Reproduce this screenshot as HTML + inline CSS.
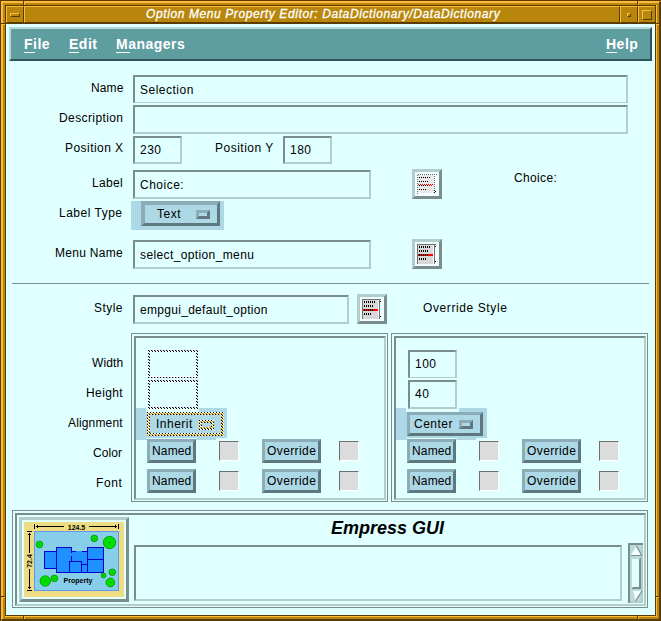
<!DOCTYPE html>
<html><head><meta charset="utf-8">
<style>
*{margin:0;padding:0;box-sizing:border-box}
html,body{width:661px;height:621px;overflow:hidden;background:#B8860B}
body{position:relative;font-family:"Liberation Sans",sans-serif;font-size:12px;color:#000}
.a{position:absolute}
.od{position:absolute;background:#583C04}
.ol{position:absolute;background:#FFBA3E}
.om{position:absolute;background:#B8860B}
.c{position:absolute;background:#E0FFFF}
.bs{position:absolute;background:#7B8C8C}
.ts{position:absolute;background:#B3CCCC}
.tf{position:absolute;background:#E0FFFF;border-style:solid;border-width:2px;border-color:#7B8C8C #B3CCCC #B3CCCC #7B8C8C}
.t{position:absolute;white-space:nowrap;line-height:12px;font-size:12px;letter-spacing:0.5px}
.btn{position:absolute;background:#ADD8E6;border-style:solid;border-width:3px;border-color:#8AADB8 #5F777F #5F777F #8AADB8}
.sq{position:absolute;background:#DCDCDC;border-style:solid;border-width:1px;border-color:#6E6E6E #FFFFFF #FFFFFF #6E6E6E}
.ib{position:absolute;background:#fff;border-style:solid;border-width:3px;border-color:#B3CCCC #7B8C8C #7B8C8C #B3CCCC}
.dot{position:absolute;background:repeating-conic-gradient(#000 0 25%,#E8D8F8 0 50%) 0 0/2px 2px}
.mb{position:absolute;white-space:nowrap;font-weight:bold;font-size:14px;line-height:14px;color:#fff;letter-spacing:0.5px}
.ul{position:absolute;background:#fff;height:1px}
</style></head><body>
<svg width="0" height="0" style="position:absolute"><defs>
<pattern id="pv" width="3" height="3" patternUnits="userSpaceOnUse"><rect width="3" height="3" fill="#F4FFFF"/><rect x="0" y="0" width="1" height="1" fill="#000"/><rect x="1" y="1" width="1" height="1" fill="#000"/><rect x="1" y="0" width="1" height="1" fill="#B9A0E8"/></pattern>
<pattern id="po" width="3" height="3" patternUnits="userSpaceOnUse"><rect width="3" height="3" fill="#F4FFFF"/><rect x="0" y="0" width="1" height="1" fill="#000"/><rect x="2" y="2" width="1" height="1" fill="#000"/><rect x="1" y="1" width="2" height="1" fill="#D4980E"/><rect x="0" y="2" width="1" height="1" fill="#D4980E"/></pattern>
</defs></svg>
<!-- window frame -->
<div class="od" style="left:0;top:0;width:661px;height:1px"></div>
<div class="od" style="left:0;top:0;width:1px;height:621px"></div>
<div class="ol" style="left:1px;top:1px;width:658px;height:2px"></div>
<div class="ol" style="left:1px;top:1px;width:2px;height:618px"></div>
<div class="od" style="left:659px;top:2px;width:2px;height:619px"></div>
<div class="od" style="left:2px;top:619px;width:659px;height:2px"></div>
<div class="od" style="left:5px;top:5px;width:651px;height:1px"></div>
<div class="od" style="left:5px;top:5px;width:1px;height:611px"></div>
<div class="ol" style="left:656px;top:5px;width:1px;height:612px"></div>
<div class="ol" style="left:5px;top:616px;width:652px;height:1px"></div>
<!-- corner separators -->
<div class="od" style="left:23px;top:0;width:1px;height:6px"></div>
<div class="ol" style="left:24px;top:1px;width:1px;height:4px"></div>
<div class="od" style="left:637px;top:0;width:1px;height:6px"></div>
<div class="ol" style="left:638px;top:1px;width:1px;height:4px"></div>
<div class="od" style="left:0;top:23px;width:6px;height:1px"></div>
<div class="ol" style="left:1px;top:24px;width:4px;height:1px"></div>
<div class="od" style="left:655px;top:23px;width:6px;height:1px"></div>
<div class="ol" style="left:656px;top:24px;width:3px;height:1px"></div>
<div class="od" style="left:0;top:596px;width:6px;height:1px"></div>
<div class="ol" style="left:1px;top:597px;width:4px;height:1px"></div>
<div class="od" style="left:655px;top:596px;width:6px;height:1px"></div>
<div class="ol" style="left:656px;top:597px;width:3px;height:1px"></div>
<div class="od" style="left:23px;top:616px;width:1px;height:5px"></div>
<div class="ol" style="left:24px;top:617px;width:1px;height:2px"></div>
<div class="od" style="left:637px;top:616px;width:1px;height:5px"></div>
<div class="ol" style="left:638px;top:617px;width:1px;height:2px"></div>
<!-- title bar buttons -->
<div class="om" style="left:6px;top:6px;width:18px;height:17px;border-style:solid;border-width:1px;border-color:#FFBA3E #583C04 #583C04 #FFBA3E"></div>
<div class="om" style="left:10px;top:13px;width:10px;height:4px;border-style:solid;border-width:1px;border-color:#FFBA3E #583C04 #583C04 #FFBA3E"></div>
<div class="om" style="left:24px;top:6px;width:596px;height:17px;border-style:solid;border-width:1px;border-color:#FFBA3E #583C04 #583C04 #FFBA3E"></div>
<div class="om" style="left:620px;top:6px;width:18px;height:17px;border-style:solid;border-width:1px;border-color:#FFBA3E #583C04 #583C04 #FFBA3E"></div>
<div class="om" style="left:627px;top:13px;width:4px;height:4px;border-style:solid;border-width:1px;border-color:#FFBA3E #583C04 #583C04 #FFBA3E"></div>
<div class="om" style="left:638px;top:6px;width:18px;height:17px;border-style:solid;border-width:1px;border-color:#FFBA3E #583C04 #583C04 #FFBA3E"></div>
<div class="om" style="left:642px;top:10px;width:10px;height:10px;border-style:solid;border-width:1px;border-color:#FFBA3E #583C04 #583C04 #FFBA3E"></div>
<div class="a" style="left:146px;top:6px;white-space:nowrap;font-style:italic;font-size:12px;letter-spacing:0.6px;line-height:16px;color:#fff;-webkit-text-stroke:0.3px #fff">Option Menu Property Editor: DataDictionary/DataDictionary</div>
<!-- content area -->
<div class="od" style="left:6px;top:23px;width:650px;height:1px"></div>
<div class="od" style="left:655px;top:6px;width:1px;height:610px"></div>
<div class="od" style="left:6px;top:615px;width:650px;height:1px"></div>
<div class="c" style="left:6px;top:24px;width:649px;height:591px"></div>

<!-- menubar -->
<div class="a" style="left:9px;top:27px;width:643px;height:34px;background:#5F9EA0;border-style:solid;border-width:2px;border-color:#B9D7D7 #2E5057 #2E5057 #B9D7D7"></div>
<div class="mb" style="left:24px;top:37px">File</div>
<div class="ul" style="left:24px;top:52px;width:11px"></div>
<div class="mb" style="left:69px;top:37px">Edit</div>
<div class="ul" style="left:69px;top:52px;width:10px"></div>
<div class="mb" style="left:116px;top:37px">Managers</div>
<div class="ul" style="left:116px;top:52px;width:14px"></div>
<div class="mb" style="left:606px;top:37px">Help</div>
<div class="ul" style="left:606px;top:52px;width:11px"></div>

<!-- labels -->
<div class="t" style="left:91px;top:82px;letter-spacing:0.1px">Name</div>
<div class="t" style="left:59px;top:112px;letter-spacing:0.4px">Description</div>
<div class="t" style="left:65px;top:142px;letter-spacing:0.45px">Position X</div>
<div class="t" style="left:215px;top:142px;letter-spacing:0.5px">Position Y</div>
<div class="t" style="left:92px;top:177px;letter-spacing:0.3px">Label</div>
<div class="t" style="left:59px;top:207px;letter-spacing:0.5px">Label Type</div>
<div class="t" style="left:55px;top:247px;letter-spacing:0.3px">Menu Name</div>
<div class="t" style="left:514px;top:172px;letter-spacing:0.35px">Choice:</div>
<div class="t" style="left:94px;top:302px;letter-spacing:0.45px">Style</div>
<div class="t" style="left:423px;top:302px;letter-spacing:0.6px">Override Style</div>
<div class="t" style="left:92px;top:357px;letter-spacing:0.1px">Width</div>
<div class="t" style="left:86px;top:387px;letter-spacing:0.4px">Height</div>
<div class="t" style="left:68px;top:417px;letter-spacing:0.15px">Alignment</div>
<div class="t" style="left:93px;top:447px;letter-spacing:0.1px">Color</div>
<div class="t" style="left:96px;top:477px;letter-spacing:0.6px">Font</div>

<!-- text fields -->
<div class="tf" style="left:133px;top:75px;width:495px;height:28px;border-bottom-width:1px"></div>
<div class="t" style="left:140px;top:84px">Selection</div>
<div class="tf" style="left:133px;top:105px;width:495px;height:29px"></div>
<div class="tf" style="left:133px;top:136px;width:49px;height:28px"></div>
<div class="t" style="left:140px;top:144px">230</div>
<div class="tf" style="left:283px;top:136px;width:49px;height:28px"></div>
<div class="t" style="left:290px;top:144px">180</div>
<div class="tf" style="left:133px;top:170px;width:238px;height:29px"></div>
<div class="t" style="left:140px;top:179px">Choice:</div>
<div class="tf" style="left:133px;top:240px;width:238px;height:29px"></div>
<div class="t" style="left:140px;top:249px;letter-spacing:0.38px">select_option_menu</div>

<!-- label type option menu -->
<div class="a" style="left:131px;top:201px;width:93px;height:29px;background:#ADD8E6"></div>
<div class="a" style="left:141px;top:201px;width:79px;height:25px;background:#ADD8E6;border-style:solid;border-width:4px 3px 3px 4px;border-color:#8AADB8 #5F777F #5F777F #8AADB8"></div>
<div class="t" style="left:157px;top:208px">Text</div>
<div class="btn" style="left:196px;top:210px;width:14px;height:9px"></div>

<!-- icon buttons -->
<div class="ib" style="left:412px;top:169px;width:30px;height:30px;background:#F0FFFF"></div>
<svg class="a" style="left:415px;top:172px" width="24" height="24" shape-rendering="crispEdges"><rect x="3" y="3" width="1" height="1" fill="#E6D2D2"/><rect x="5" y="3" width="1" height="1" fill="#E6D2D2"/><rect x="7" y="3" width="1" height="1" fill="#E6D2D2"/><rect x="9" y="3" width="1" height="1" fill="#E6D2D2"/><rect x="11" y="3" width="1" height="1" fill="#E6D2D2"/><rect x="13" y="3" width="1" height="1" fill="#E6D2D2"/><rect x="15" y="3" width="1" height="1" fill="#E6D2D2"/><rect x="17" y="3" width="1" height="1" fill="#E6D2D2"/><rect x="4" y="4" width="1" height="1" fill="#E6D2D2"/><rect x="6" y="4" width="1" height="1" fill="#E6D2D2"/><rect x="8" y="4" width="1" height="1" fill="#E6D2D2"/><rect x="10" y="4" width="1" height="1" fill="#E6D2D2"/><rect x="12" y="4" width="1" height="1" fill="#E6D2D2"/><rect x="14" y="4" width="1" height="1" fill="#E6D2D2"/><rect x="16" y="4" width="1" height="1" fill="#E6D2D2"/><rect x="18" y="4" width="1" height="1" fill="#E6D2D2"/><rect x="3" y="5" width="1" height="1" fill="#E6D2D2"/><rect x="5" y="5" width="1" height="1" fill="#E6D2D2"/><rect x="7" y="5" width="1" height="1" fill="#E6D2D2"/><rect x="9" y="5" width="1" height="1" fill="#E6D2D2"/><rect x="11" y="5" width="1" height="1" fill="#E6D2D2"/><rect x="13" y="5" width="1" height="1" fill="#E6D2D2"/><rect x="15" y="5" width="1" height="1" fill="#E6D2D2"/><rect x="17" y="5" width="1" height="1" fill="#E6D2D2"/><rect x="4" y="6" width="1" height="1" fill="#E6D2D2"/><rect x="6" y="6" width="1" height="1" fill="#E6D2D2"/><rect x="8" y="6" width="1" height="1" fill="#E6D2D2"/><rect x="10" y="6" width="1" height="1" fill="#E6D2D2"/><rect x="12" y="6" width="1" height="1" fill="#E6D2D2"/><rect x="14" y="6" width="1" height="1" fill="#E6D2D2"/><rect x="16" y="6" width="1" height="1" fill="#E6D2D2"/><rect x="18" y="6" width="1" height="1" fill="#E6D2D2"/><rect x="3" y="7" width="1" height="1" fill="#E6D2D2"/><rect x="5" y="7" width="1" height="1" fill="#E6D2D2"/><rect x="7" y="7" width="1" height="1" fill="#E6D2D2"/><rect x="9" y="7" width="1" height="1" fill="#E6D2D2"/><rect x="11" y="7" width="1" height="1" fill="#E6D2D2"/><rect x="13" y="7" width="1" height="1" fill="#E6D2D2"/><rect x="15" y="7" width="1" height="1" fill="#E6D2D2"/><rect x="17" y="7" width="1" height="1" fill="#E6D2D2"/><rect x="4" y="8" width="1" height="1" fill="#E6D2D2"/><rect x="6" y="8" width="1" height="1" fill="#E6D2D2"/><rect x="8" y="8" width="1" height="1" fill="#E6D2D2"/><rect x="10" y="8" width="1" height="1" fill="#E6D2D2"/><rect x="12" y="8" width="1" height="1" fill="#E6D2D2"/><rect x="14" y="8" width="1" height="1" fill="#E6D2D2"/><rect x="16" y="8" width="1" height="1" fill="#E6D2D2"/><rect x="18" y="8" width="1" height="1" fill="#E6D2D2"/><rect x="3" y="9" width="1" height="1" fill="#E6D2D2"/><rect x="5" y="9" width="1" height="1" fill="#E6D2D2"/><rect x="7" y="9" width="1" height="1" fill="#E6D2D2"/><rect x="9" y="9" width="1" height="1" fill="#E6D2D2"/><rect x="11" y="9" width="1" height="1" fill="#E6D2D2"/><rect x="13" y="9" width="1" height="1" fill="#E6D2D2"/><rect x="15" y="9" width="1" height="1" fill="#E6D2D2"/><rect x="17" y="9" width="1" height="1" fill="#E6D2D2"/><rect x="4" y="10" width="1" height="1" fill="#E6D2D2"/><rect x="6" y="10" width="1" height="1" fill="#E6D2D2"/><rect x="8" y="10" width="1" height="1" fill="#E6D2D2"/><rect x="10" y="10" width="1" height="1" fill="#E6D2D2"/><rect x="12" y="10" width="1" height="1" fill="#E6D2D2"/><rect x="14" y="10" width="1" height="1" fill="#E6D2D2"/><rect x="16" y="10" width="1" height="1" fill="#E6D2D2"/><rect x="18" y="10" width="1" height="1" fill="#E6D2D2"/><rect x="3" y="11" width="1" height="1" fill="#E6D2D2"/><rect x="5" y="11" width="1" height="1" fill="#E6D2D2"/><rect x="7" y="11" width="1" height="1" fill="#E6D2D2"/><rect x="9" y="11" width="1" height="1" fill="#E6D2D2"/><rect x="11" y="11" width="1" height="1" fill="#E6D2D2"/><rect x="13" y="11" width="1" height="1" fill="#E6D2D2"/><rect x="15" y="11" width="1" height="1" fill="#E6D2D2"/><rect x="17" y="11" width="1" height="1" fill="#E6D2D2"/><rect x="4" y="12" width="1" height="1" fill="#E6D2D2"/><rect x="6" y="12" width="1" height="1" fill="#E6D2D2"/><rect x="8" y="12" width="1" height="1" fill="#E6D2D2"/><rect x="10" y="12" width="1" height="1" fill="#E6D2D2"/><rect x="12" y="12" width="1" height="1" fill="#E6D2D2"/><rect x="14" y="12" width="1" height="1" fill="#E6D2D2"/><rect x="16" y="12" width="1" height="1" fill="#E6D2D2"/><rect x="18" y="12" width="1" height="1" fill="#E6D2D2"/><rect x="3" y="13" width="1" height="1" fill="#E6D2D2"/><rect x="5" y="13" width="1" height="1" fill="#E6D2D2"/><rect x="7" y="13" width="1" height="1" fill="#E6D2D2"/><rect x="9" y="13" width="1" height="1" fill="#E6D2D2"/><rect x="11" y="13" width="1" height="1" fill="#E6D2D2"/><rect x="13" y="13" width="1" height="1" fill="#E6D2D2"/><rect x="15" y="13" width="1" height="1" fill="#E6D2D2"/><rect x="17" y="13" width="1" height="1" fill="#E6D2D2"/><rect x="4" y="14" width="1" height="1" fill="#E6D2D2"/><rect x="6" y="14" width="1" height="1" fill="#E6D2D2"/><rect x="8" y="14" width="1" height="1" fill="#E6D2D2"/><rect x="10" y="14" width="1" height="1" fill="#E6D2D2"/><rect x="12" y="14" width="1" height="1" fill="#E6D2D2"/><rect x="14" y="14" width="1" height="1" fill="#E6D2D2"/><rect x="16" y="14" width="1" height="1" fill="#E6D2D2"/><rect x="18" y="14" width="1" height="1" fill="#E6D2D2"/><rect x="3" y="15" width="1" height="1" fill="#E6D2D2"/><rect x="5" y="15" width="1" height="1" fill="#E6D2D2"/><rect x="7" y="15" width="1" height="1" fill="#E6D2D2"/><rect x="9" y="15" width="1" height="1" fill="#E6D2D2"/><rect x="11" y="15" width="1" height="1" fill="#E6D2D2"/><rect x="13" y="15" width="1" height="1" fill="#E6D2D2"/><rect x="15" y="15" width="1" height="1" fill="#E6D2D2"/><rect x="17" y="15" width="1" height="1" fill="#E6D2D2"/><rect x="4" y="16" width="1" height="1" fill="#E6D2D2"/><rect x="6" y="16" width="1" height="1" fill="#E6D2D2"/><rect x="8" y="16" width="1" height="1" fill="#E6D2D2"/><rect x="10" y="16" width="1" height="1" fill="#E6D2D2"/><rect x="12" y="16" width="1" height="1" fill="#E6D2D2"/><rect x="14" y="16" width="1" height="1" fill="#E6D2D2"/><rect x="16" y="16" width="1" height="1" fill="#E6D2D2"/><rect x="18" y="16" width="1" height="1" fill="#E6D2D2"/><rect x="3" y="17" width="1" height="1" fill="#E6D2D2"/><rect x="5" y="17" width="1" height="1" fill="#E6D2D2"/><rect x="7" y="17" width="1" height="1" fill="#E6D2D2"/><rect x="9" y="17" width="1" height="1" fill="#E6D2D2"/><rect x="11" y="17" width="1" height="1" fill="#E6D2D2"/><rect x="13" y="17" width="1" height="1" fill="#E6D2D2"/><rect x="15" y="17" width="1" height="1" fill="#E6D2D2"/><rect x="17" y="17" width="1" height="1" fill="#E6D2D2"/><rect x="4" y="18" width="1" height="1" fill="#E6D2D2"/><rect x="6" y="18" width="1" height="1" fill="#E6D2D2"/><rect x="8" y="18" width="1" height="1" fill="#E6D2D2"/><rect x="10" y="18" width="1" height="1" fill="#E6D2D2"/><rect x="12" y="18" width="1" height="1" fill="#E6D2D2"/><rect x="14" y="18" width="1" height="1" fill="#E6D2D2"/><rect x="16" y="18" width="1" height="1" fill="#E6D2D2"/><rect x="18" y="18" width="1" height="1" fill="#E6D2D2"/><rect x="3" y="19" width="1" height="1" fill="#E6D2D2"/><rect x="5" y="19" width="1" height="1" fill="#E6D2D2"/><rect x="7" y="19" width="1" height="1" fill="#E6D2D2"/><rect x="9" y="19" width="1" height="1" fill="#E6D2D2"/><rect x="11" y="19" width="1" height="1" fill="#E6D2D2"/><rect x="13" y="19" width="1" height="1" fill="#E6D2D2"/><rect x="15" y="19" width="1" height="1" fill="#E6D2D2"/><rect x="17" y="19" width="1" height="1" fill="#E6D2D2"/><rect x="4" y="20" width="1" height="1" fill="#E6D2D2"/><rect x="6" y="20" width="1" height="1" fill="#E6D2D2"/><rect x="8" y="20" width="1" height="1" fill="#E6D2D2"/><rect x="10" y="20" width="1" height="1" fill="#E6D2D2"/><rect x="12" y="20" width="1" height="1" fill="#E6D2D2"/><rect x="14" y="20" width="1" height="1" fill="#E6D2D2"/><rect x="16" y="20" width="1" height="1" fill="#E6D2D2"/><rect x="18" y="20" width="1" height="1" fill="#E6D2D2"/><rect x="3" y="2" width="1" height="1" fill="#6E6E6E"/><rect x="5" y="2" width="1" height="1" fill="#6E6E6E"/><rect x="7" y="2" width="1" height="1" fill="#6E6E6E"/><rect x="9" y="2" width="1" height="1" fill="#6E6E6E"/><rect x="11" y="2" width="1" height="1" fill="#6E6E6E"/><rect x="13" y="2" width="1" height="1" fill="#6E6E6E"/><rect x="15" y="2" width="1" height="1" fill="#6E6E6E"/><rect x="17" y="2" width="1" height="1" fill="#6E6E6E"/><rect x="19" y="2" width="1" height="1" fill="#6E6E6E"/><rect x="21" y="2" width="1" height="1" fill="#6E6E6E"/><rect x="2" y="3" width="1" height="1" fill="#6E6E6E"/><rect x="2" y="5" width="1" height="1" fill="#6E6E6E"/><rect x="2" y="7" width="1" height="1" fill="#6E6E6E"/><rect x="2" y="9" width="1" height="1" fill="#6E6E6E"/><rect x="2" y="11" width="1" height="1" fill="#6E6E6E"/><rect x="2" y="13" width="1" height="1" fill="#6E6E6E"/><rect x="2" y="15" width="1" height="1" fill="#6E6E6E"/><rect x="2" y="17" width="1" height="1" fill="#6E6E6E"/><rect x="2" y="19" width="1" height="1" fill="#6E6E6E"/><rect x="2" y="21" width="1" height="1" fill="#6E6E6E"/><rect x="19" y="4" width="1" height="1" fill="#6E6E6E"/><rect x="19" y="6" width="1" height="1" fill="#6E6E6E"/><rect x="19" y="8" width="1" height="1" fill="#6E6E6E"/><rect x="19" y="10" width="1" height="1" fill="#6E6E6E"/><rect x="19" y="12" width="1" height="1" fill="#6E6E6E"/><rect x="19" y="14" width="1" height="1" fill="#6E6E6E"/><rect x="19" y="16" width="1" height="1" fill="#6E6E6E"/><rect x="19" y="18" width="1" height="1" fill="#6E6E6E"/><rect x="19" y="20" width="1" height="1" fill="#6E6E6E"/><rect x="4" y="5" width="1" height="1" fill="#000"/><rect x="6" y="5" width="1" height="1" fill="#000"/><rect x="8" y="5" width="1" height="1" fill="#000"/><rect x="10" y="5" width="1" height="1" fill="#000"/><rect x="12" y="5" width="1" height="1" fill="#000"/><rect x="14" y="5" width="1" height="1" fill="#000"/><rect x="4" y="9" width="1" height="1" fill="#000"/><rect x="6" y="9" width="1" height="1" fill="#000"/><rect x="8" y="9" width="1" height="1" fill="#000"/><rect x="10" y="9" width="1" height="1" fill="#000"/><rect x="12" y="9" width="1" height="1" fill="#000"/><rect x="4" y="13" width="1" height="1" fill="#000"/><rect x="6" y="13" width="1" height="1" fill="#000"/><rect x="8" y="13" width="1" height="1" fill="#000"/><rect x="10" y="13" width="1" height="1" fill="#000"/><rect x="12" y="13" width="1" height="1" fill="#000"/><rect x="3" y="12" width="1" height="1" fill="#F00"/><rect x="5" y="12" width="1" height="1" fill="#F00"/><rect x="7" y="12" width="1" height="1" fill="#F00"/><rect x="9" y="12" width="1" height="1" fill="#F00"/><rect x="11" y="12" width="1" height="1" fill="#F00"/><rect x="13" y="12" width="1" height="1" fill="#F00"/><rect x="15" y="12" width="1" height="1" fill="#F00"/><rect x="17" y="12" width="1" height="1" fill="#F00"/><rect x="14" y="13" width="1" height="1" fill="#F00"/><rect x="16" y="13" width="1" height="1" fill="#F00"/><rect x="4" y="17" width="1" height="1" fill="#000"/><rect x="6" y="17" width="1" height="1" fill="#000"/><rect x="8" y="17" width="1" height="1" fill="#000"/><rect x="10" y="17" width="1" height="1" fill="#000"/><rect x="19" y="18" width="1" height="1" fill="#000"/><rect x="20" y="19" width="1" height="1" fill="#000"/><rect x="19" y="20" width="1" height="1" fill="#000"/></svg>
<div class="ib" style="left:412px;top:239px;width:30px;height:30px;background:#F0FFFF"></div>
<svg class="a" style="left:415px;top:242px" width="24" height="24" shape-rendering="crispEdges"><rect x="3" y="3" width="15" height="19" fill="#D8D8D8"/><rect x="18" y="3" width="1" height="19" fill="#FFFFFF"/><rect x="2" y="2" width="1" height="20" fill="#707070"/><rect x="2" y="2" width="19" height="1" fill="#707070"/><rect x="19" y="3" width="1" height="19" fill="#707070"/><rect x="20" y="4" width="1" height="1" fill="#000"/><rect x="20" y="19" width="1" height="1" fill="#000"/><rect x="3" y="12" width="15" height="2" fill="#F00"/><rect x="4" y="4" width="1" height="2" fill="#000"/><rect x="6" y="4" width="1" height="2" fill="#000"/><rect x="8" y="4" width="1" height="2" fill="#000"/><rect x="10" y="4" width="1" height="2" fill="#000"/><rect x="12" y="4" width="1" height="2" fill="#000"/><rect x="14" y="4" width="1" height="2" fill="#000"/><rect x="4" y="8" width="1" height="2" fill="#000"/><rect x="6" y="8" width="1" height="2" fill="#000"/><rect x="8" y="8" width="1" height="2" fill="#000"/><rect x="10" y="8" width="1" height="2" fill="#000"/><rect x="12" y="8" width="1" height="2" fill="#000"/><rect x="4" y="12" width="1" height="2" fill="#000"/><rect x="6" y="12" width="1" height="2" fill="#000"/><rect x="8" y="12" width="1" height="2" fill="#000"/><rect x="10" y="12" width="1" height="2" fill="#000"/><rect x="12" y="12" width="1" height="2" fill="#000"/><rect x="4" y="16" width="1" height="2" fill="#000"/><rect x="6" y="16" width="1" height="2" fill="#000"/><rect x="8" y="16" width="1" height="2" fill="#000"/><rect x="10" y="16" width="1" height="2" fill="#000"/></svg>
<div class="ib" style="left:357px;top:294px;width:30px;height:30px;background:#F0FFFF"></div>
<svg class="a" style="left:360px;top:297px" width="24" height="24" shape-rendering="crispEdges"><rect x="3" y="3" width="15" height="19" fill="#D8D8D8"/><rect x="18" y="3" width="1" height="19" fill="#FFFFFF"/><rect x="2" y="2" width="1" height="20" fill="#707070"/><rect x="2" y="2" width="19" height="1" fill="#707070"/><rect x="19" y="3" width="1" height="19" fill="#707070"/><rect x="20" y="4" width="1" height="1" fill="#000"/><rect x="20" y="19" width="1" height="1" fill="#000"/><rect x="3" y="12" width="15" height="2" fill="#F00"/><rect x="4" y="4" width="1" height="2" fill="#000"/><rect x="6" y="4" width="1" height="2" fill="#000"/><rect x="8" y="4" width="1" height="2" fill="#000"/><rect x="10" y="4" width="1" height="2" fill="#000"/><rect x="12" y="4" width="1" height="2" fill="#000"/><rect x="14" y="4" width="1" height="2" fill="#000"/><rect x="4" y="8" width="1" height="2" fill="#000"/><rect x="6" y="8" width="1" height="2" fill="#000"/><rect x="8" y="8" width="1" height="2" fill="#000"/><rect x="10" y="8" width="1" height="2" fill="#000"/><rect x="12" y="8" width="1" height="2" fill="#000"/><rect x="4" y="12" width="1" height="2" fill="#000"/><rect x="6" y="12" width="1" height="2" fill="#000"/><rect x="8" y="12" width="1" height="2" fill="#000"/><rect x="10" y="12" width="1" height="2" fill="#000"/><rect x="12" y="12" width="1" height="2" fill="#000"/><rect x="4" y="16" width="1" height="2" fill="#000"/><rect x="6" y="16" width="1" height="2" fill="#000"/><rect x="8" y="16" width="1" height="2" fill="#000"/><rect x="10" y="16" width="1" height="2" fill="#000"/></svg>

<!-- separator -->
<div class="bs" style="left:12px;top:283px;width:637px;height:1px"></div>

<!-- style field -->
<div class="tf" style="left:133px;top:295px;width:216px;height:29px"></div>
<div class="t" style="left:140px;top:304px;letter-spacing:0.3px">empgui_default_option</div>

<!-- left frame -->
<div class="a" style="left:131px;top:333px;width:257px;height:169px;border:1px solid #7B8C8C"></div>
<div class="a" style="left:134px;top:336px;width:252px;height:164px;border-style:solid;border-width:2px;border-color:#7B8C8C #B3CCCC #B3CCCC #7B8C8C"></div>
<!-- right frame -->
<div class="a" style="left:391px;top:333px;width:257px;height:169px;border:1px solid #7B8C8C"></div>
<div class="a" style="left:394px;top:336px;width:252px;height:164px;border-style:solid;border-width:2px;border-color:#7B8C8C #B3CCCC #B3CCCC #7B8C8C"></div>

<!-- left frame content -->
<div class="a" style="left:136px;top:408px;width:91px;height:30px;background:#ADD8E6"></div>
<div class="a" style="left:136px;top:438px;width:80px;height:2px;background:#ADD8E6"></div>
<div class="c" style="left:146px;top:408px;width:53px;height:4px"></div>
<div class="c" style="left:146px;top:438px;width:51px;height:1px"></div>
<div class="a" style="left:396px;top:408px;width:91px;height:30px;background:#ADD8E6"></div>
<div class="a" style="left:396px;top:438px;width:80px;height:2px;background:#ADD8E6"></div>
<div class="c" style="left:406px;top:408px;width:53px;height:4px"></div>
<div class="c" style="left:406px;top:438px;width:51px;height:1px"></div>
<svg class="a" style="left:148px;top:350px" width="50" height="28" shape-rendering="crispEdges"><path d="M0 0h50v28h-50z M2 2v24h46v-24z" fill="url(#pv)" fill-rule="evenodd"/></svg>
<svg class="a" style="left:148px;top:380px" width="50" height="29" shape-rendering="crispEdges"><path d="M0 0h50v29h-50z M2 2v25h46v-25z" fill="url(#pv)" fill-rule="evenodd"/></svg>
<svg class="a" style="left:147px;top:412px" width="77" height="24" shape-rendering="crispEdges"><path d="M0 0h77v24h-77z M3 3v18h71v-18z" fill="url(#po)" fill-rule="evenodd"/></svg>
<div class="t" style="left:156px;top:418px">Inherit</div>
<svg class="a" style="left:199px;top:420px" width="15" height="10" shape-rendering="crispEdges"><path d="M0 0h15v10h-15z M3 3v4h9v-4z" fill="url(#po)" fill-rule="evenodd"/></svg>

<div class="btn" style="left:147px;top:439px;width:49px;height:24px"></div>
<div class="t" style="left:152px;top:445px;letter-spacing:0.15px">Named</div>
<div class="sq" style="left:219px;top:441px;width:20px;height:20px"></div>
<div class="btn" style="left:262px;top:439px;width:59px;height:24px"></div>
<div class="t" style="left:267px;top:445px;letter-spacing:0.4px">Override</div>
<div class="sq" style="left:339px;top:441px;width:20px;height:20px"></div>

<div class="btn" style="left:147px;top:469px;width:49px;height:24px"></div>
<div class="t" style="left:152px;top:475px;letter-spacing:0.15px">Named</div>
<div class="sq" style="left:219px;top:471px;width:20px;height:20px"></div>
<div class="btn" style="left:262px;top:469px;width:59px;height:24px"></div>
<div class="t" style="left:267px;top:475px;letter-spacing:0.4px">Override</div>
<div class="sq" style="left:339px;top:471px;width:20px;height:20px"></div>

<!-- right frame content -->
<div class="tf" style="left:408px;top:350px;width:49px;height:28px;border-bottom-width:1px"></div>
<div class="t" style="left:415px;top:358px">100</div>
<div class="tf" style="left:408px;top:380px;width:49px;height:29px"></div>
<div class="t" style="left:415px;top:388px">40</div>
<div class="btn" style="left:407px;top:412px;width:76px;height:24px"></div>
<div class="t" style="left:414px;top:418px">Center</div>
<div class="btn" style="left:459px;top:420px;width:14px;height:9px"></div>

<div class="btn" style="left:407px;top:439px;width:49px;height:24px"></div>
<div class="t" style="left:412px;top:445px;letter-spacing:0.15px">Named</div>
<div class="sq" style="left:479px;top:441px;width:20px;height:20px"></div>
<div class="btn" style="left:522px;top:439px;width:59px;height:24px"></div>
<div class="t" style="left:527px;top:445px;letter-spacing:0.4px">Override</div>
<div class="sq" style="left:599px;top:441px;width:20px;height:20px"></div>

<div class="btn" style="left:407px;top:469px;width:49px;height:24px"></div>
<div class="t" style="left:412px;top:475px;letter-spacing:0.15px">Named</div>
<div class="sq" style="left:479px;top:471px;width:20px;height:20px"></div>
<div class="btn" style="left:522px;top:469px;width:59px;height:24px"></div>
<div class="t" style="left:527px;top:475px;letter-spacing:0.4px">Override</div>
<div class="sq" style="left:599px;top:471px;width:20px;height:20px"></div>

<!-- bottom frame -->
<div class="a" style="left:12px;top:510px;width:636px;height:98px;border:1px solid #7B8C8C"></div>
<div class="a" style="left:15px;top:513px;width:631px;height:93px;border-style:solid;border-width:2px;border-color:#7B8C8C #B3CCCC #B3CCCC #7B8C8C"></div>
<div class="a" style="left:19px;top:517px;width:110px;height:85px;border-style:solid;border-width:3px;border-color:#B3CCCC #7B8C8C #7B8C8C #B3CCCC"></div>
<svg class="a" style="left:24px;top:522px" width="100" height="75" viewBox="0 0 100 75">
<rect x="0" y="0" width="100" height="75" fill="#EEDC82"/>
<rect x="10.5" y="9.5" width="84" height="59" fill="#87CEEB" stroke="#6495ED" stroke-width="1"/>
<g shape-rendering="crispEdges" fill="#000">
<rect x="10" y="2" width="1" height="5"/>
<rect x="12" y="4" width="28" height="1"/>
<rect x="13" y="3" width="1" height="3"/>
<rect x="65" y="4" width="28" height="1"/>
<rect x="91" y="3" width="1" height="3"/>
<rect x="94" y="2" width="1" height="5"/>
<rect x="3" y="9" width="5" height="1"/>
<rect x="5" y="11" width="1" height="20"/>
<rect x="4" y="12" width="3" height="1"/>
<rect x="5" y="47" width="1" height="20"/>
<rect x="4" y="65" width="3" height="1"/>
<rect x="3" y="68" width="5" height="1"/>
</g>
<text x="52.5" y="7.6" font-family="Liberation Sans" font-weight="bold" font-size="7" text-anchor="middle" fill="#000">124.5</text>
<text transform="translate(7.8,39) rotate(-90)" font-family="Liberation Sans" font-weight="bold" font-size="7" text-anchor="middle" fill="#000">72.4</text>
<g fill="#1E90FF" stroke="#0000CD" stroke-width="1" shape-rendering="crispEdges">
<rect x="20.5" y="29.5" width="12" height="17"/>
<rect x="32.5" y="25.5" width="15" height="25"/>
<rect x="47.5" y="29.5" width="16" height="21"/>
<rect x="63.5" y="25.5" width="16" height="25"/>
<rect x="45.5" y="39.5" width="12" height="11"/>
<line x1="63.5" y1="37.5" x2="79.5" y2="37.5"/>
<line x1="57.5" y1="42.5" x2="63.5" y2="42.5"/>
</g>
<g fill="#1E90FF" shape-rendering="crispEdges">
<rect x="52" y="29" width="6" height="1"/>
<rect x="47" y="31" width="2" height="3"/>
<rect x="33" y="40" width="12" height="1" fill="#1E90FF"/>
</g>
<g fill="#00E000" stroke="#009000" stroke-width="0.8">
<circle cx="15.5" cy="22.5" r="3.3"/>
<circle cx="70.3" cy="16.4" r="3.3"/>
<circle cx="85.5" cy="20.5" r="6.2"/>
<circle cx="21.3" cy="59" r="5.2"/>
<circle cx="30.4" cy="56.4" r="3.3"/>
<circle cx="79.5" cy="53.5" r="2.4"/>
<circle cx="88.3" cy="50.2" r="3.3"/>
<circle cx="86.4" cy="60.5" r="4.4"/>
</g>
<g fill="#006000">
<circle cx="15.5" cy="22.5" r="0.5"/><circle cx="70.3" cy="16.4" r="0.5"/><circle cx="85.5" cy="20.5" r="0.6"/><circle cx="21.3" cy="59" r="0.6"/><circle cx="30.4" cy="56.4" r="0.5"/><circle cx="79.5" cy="53.5" r="0.4"/><circle cx="88.3" cy="50.2" r="0.5"/><circle cx="86.4" cy="60.5" r="0.5"/>
</g>
<text x="54" y="60.5" font-family="Liberation Sans" font-weight="bold" font-size="7" text-anchor="middle" fill="#000">Property</text>
</svg>
<div class="a" style="left:331px;top:519px;white-space:nowrap;font-weight:bold;font-style:italic;font-size:18px;line-height:18px">Empress GUI</div>
<div class="tf" style="left:134px;top:545px;width:488px;height:56px"></div>
<!-- scrollbar -->
<svg class="a" style="left:628px;top:543px" width="15" height="60" shape-rendering="crispEdges">
<rect x="0" y="0" width="15" height="60" fill="#BED9D9"/>
<rect x="0" y="0" width="15" height="2" fill="#7B8C8C"/>
<rect x="0" y="0" width="2" height="60" fill="#7B8C8C"/>
<rect x="2" y="58" width="13" height="2" fill="#B3CCCC"/>
<rect x="13" y="2" width="2" height="58" fill="#B3CCCC"/>
<polygon points="8.5,3 3,12 14,12" fill="#F0FFFF" shape-rendering="auto"/>
<polyline points="8.5,3 13.5,12" stroke="#7B8C8C" stroke-width="1.2" fill="none" shape-rendering="auto"/>
<rect x="3" y="12" width="11" height="1" fill="#7B8C8C"/>
<rect x="4" y="16" width="7" height="28" fill="#E0FFFF"/>
<polygon points="11,16 13,14 13,46 11,46" fill="#7B8C8C"/>
<polygon points="3,46 5,44 13,44 13,46" fill="#7B8C8C"/>
<polygon points="5,48 14,48 7.5,58" fill="#F0FFFF" shape-rendering="auto"/>
<polyline points="14,48 7.5,58" stroke="#7B8C8C" stroke-width="1.2" fill="none" shape-rendering="auto"/>
</svg>
</body></html>
